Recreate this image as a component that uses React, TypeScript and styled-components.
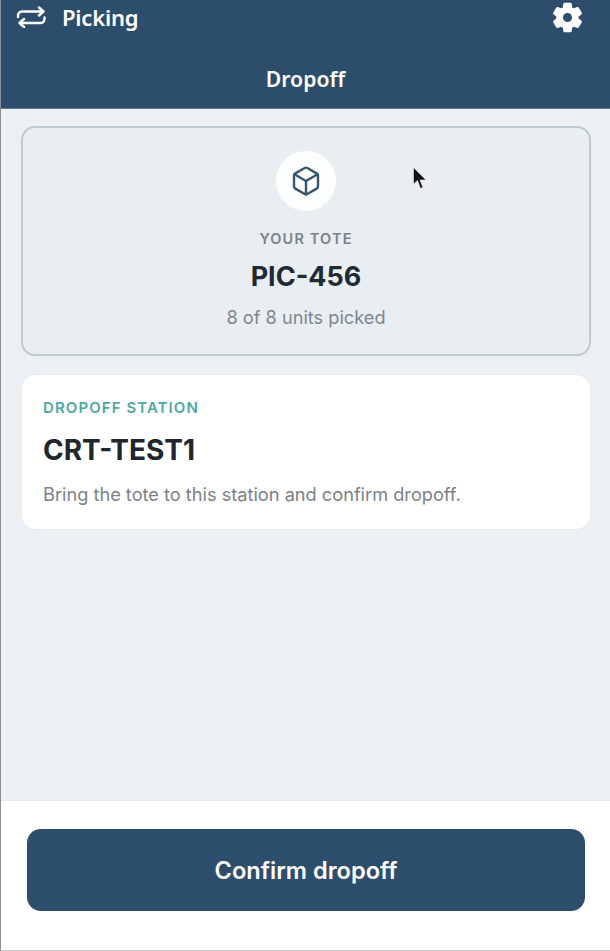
import React from "react";
import styled, { createGlobalStyle } from "styled-components";
import { Box } from "lucide-react";
import { MdSettings } from "react-icons/md";

const GlobalStyle = createGlobalStyle`
  html, body, #root {
    margin: 0;
    padding: 0;
    height: 100%;
  }
  body {
    font-family: "Inter", "Liberation Sans", sans-serif;
    background: #fff;
  }
`;

const Screen = styled.div`
  position: relative;
  display: flex;
  flex-direction: column;
  width: 610px;
  height: 951px;
  box-sizing: border-box;
  border-left: 1px solid #8a8f94;
  border-bottom: 1px solid #c9cccf;
  overflow: hidden;
`;

const Header = styled.header`
  display: flex;
  flex-direction: column;
  height: 108px;
  flex-shrink: 0;
  background: #2c4d6c;
  color: #fff;
  font-family: "Noto Sans", sans-serif;
  font-weight: 600;
  border-bottom: 1px solid #5d7a94;
  box-sizing: content-box;
`;

const TopRow = styled.div`
  display: flex;
  align-items: center;
  justify-content: space-between;
  height: 34px;
  padding: 0 25px 0 15px;
`;

const AppName = styled.div`
  display: flex;
  align-items: center;
  gap: 15px;
  font-size: 22px;
  letter-spacing: -0.2px;
`;

const ScreenTitle = styled.div`
  flex: 1;
  display: flex;
  align-items: center;
  justify-content: center;
  padding-top: 14px;
  font-size: 21.2px;
`;

const Content = styled.main`
  flex: 1;
  display: flex;
  flex-direction: column;
  gap: 19px;
  padding: 17px 19px 0 20px;
  background: #ecf0f3;
`;

const ToteCard = styled.section`
  display: flex;
  flex-direction: column;
  align-items: center;
  height: 230px;
  box-sizing: border-box;
  padding-top: 23px;
  background: #e8eef2;
  border: 2px solid #bccbd3;
  border-radius: 14px;
`;

const IconCircle = styled.div`
  display: flex;
  align-items: center;
  justify-content: center;
  width: 60px;
  height: 60px;
  border-radius: 50%;
  background: #fdfefe;
  color: #35566f;
`;

const ToteLabel = styled.div`
  margin-top: 19px;
  font-size: 14.5px;
  line-height: 18px;
  font-weight: 600;
  letter-spacing: 1.15px;
  color: #7a8388;
`;

const ToteCode = styled.div`
  margin-top: 13px;
  font-size: 27px;
  line-height: 32px;
  font-weight: 700;
  color: #1f2a33;
`;

const ToteMeta = styled.div`
  margin-top: 13px;
  font-size: 18.2px;
  line-height: 22px;
  color: #7d878d;
`;

const StationCard = styled.section`
  height: 154px;
  margin: 0 1px;
  box-sizing: border-box;
  padding: 24px 21px 0;
  background: #fff;
  border-radius: 14px;
  box-shadow: 0 0 2px rgba(60, 80, 100, 0.07);
`;

const StationLabel = styled.div`
  font-size: 15px;
  line-height: 18px;
  font-weight: 600;
  letter-spacing: 1.08px;
  color: #4fa9a2;
`;

const StationCode = styled.div`
  margin-top: 15px;
  font-size: 28px;
  line-height: 36px;
  font-weight: 700;
  color: #20262b;
`;

const StationHint = styled.div`
  margin-top: 15px;
  font-size: 18.2px;
  line-height: 22px;
  color: #7c8286;
`;

const Footer = styled.footer`
  flex-shrink: 0;
  height: 150px;
  box-sizing: border-box;
  padding: 28px 25px 0 26px;
  background: #fff;
  border-top: 1px solid #e6e8ea;
`;

const ConfirmButton = styled.button`
  display: block;
  width: 100%;
  height: 82px;
  padding: 0;
  border: 0;
  border-radius: 14px;
  background: #2c4d6c;
  color: #fff;
  font-family: "Inter", "Liberation Sans", sans-serif;
  font-size: 23.6px;
  font-weight: 600;
`;

// the icon's first path is an empty bounding square, so only the cog gets thickened
const SettingsGear = styled(MdSettings)`
  path:last-child {
    stroke: currentColor;
    stroke-width: 1;
    stroke-linejoin: round;
  }
`;

const Pointer = styled.svg`
  position: absolute;
  left: 411px;
  top: 166px;
`;

export default function App() {
  return (
    <>
      <GlobalStyle />
      <Screen>
        <Header>
          <TopRow>
            <AppName>
              {/* wide two-arrow switch mark */}
              <svg width="31" height="22" viewBox="0 0 31 22" fill="none" stroke="currentColor" strokeWidth="2.4" strokeLinecap="round" strokeLinejoin="round">
                <path d="M2 11 V9.5 a4 4 0 0 1 4 -4 H27" />
                <path d="M23 1.5 L27.5 5.5 L23 9.5" />
                <path d="M28.5 11.5 V13 a4 4 0 0 1 -4 4 H4" />
                <path d="M8 13 L3.5 17 L8 21" />
              </svg>
              Picking
            </AppName>
            <SettingsGear size={35} />
          </TopRow>
          <ScreenTitle>Dropoff</ScreenTitle>
        </Header>
        <Content>
          <ToteCard>
            <IconCircle>
              <Box size={32} strokeWidth={1.8} />
            </IconCircle>
            <ToteLabel>YOUR TOTE</ToteLabel>
            <ToteCode>PIC-456</ToteCode>
            <ToteMeta>8 of 8 units picked</ToteMeta>
          </ToteCard>
          <StationCard>
            <StationLabel>DROPOFF STATION</StationLabel>
            <StationCode>CRT-TEST1</StationCode>
            <StationHint>Bring the tote to this station and confirm dropoff.</StationHint>
          </StationCard>
        </Content>
        <Footer>
          <ConfirmButton>Confirm dropoff</ConfirmButton>
        </Footer>
        {/* mouse pointer */}
        <Pointer width="16" height="26" viewBox="0 0 16 26">
          <path d="M1.5 1.5 L1.5 18 L5.5 14.5 L8.5 22.5 L11 21.5 L8 14 L14 14 Z" fill="#111" stroke="#e8eef2" strokeWidth="0.6" />
        </Pointer>
      </Screen>
    </>
  );
}
